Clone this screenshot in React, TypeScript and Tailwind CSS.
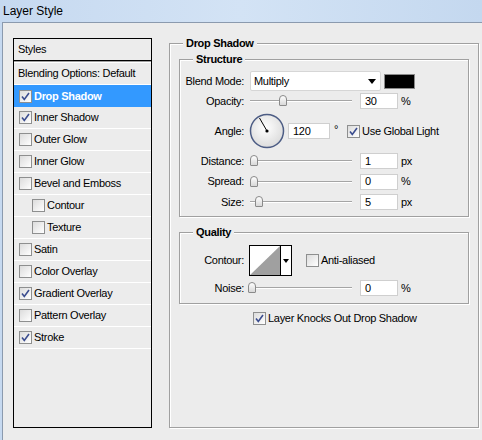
import type { ReactNode } from "react";

const styles = [
  { name: "Drop Shadow", checked: true, selected: true },
  { name: "Inner Shadow", checked: true },
  { name: "Outer Glow" },
  { name: "Inner Glow" },
  { name: "Bevel and Emboss" },
  { name: "Contour", sub: true },
  { name: "Texture", sub: true },
  { name: "Satin" },
  { name: "Color Overlay" },
  { name: "Gradient Overlay", checked: true },
  { name: "Pattern Overlay" },
  { name: "Stroke", checked: true },
];

function Check({ checked }: { checked?: boolean }) {
  return (
    <span className="flex h-[13px] w-[13px] shrink-0 items-center justify-center border border-[#8e8f8f] bg-gradient-to-br from-[#dcdcdc] to-white">
      {checked && (
        <svg width="9" height="9" viewBox="0 0 9 9">
          <path d="M1 4.5 L3.3 7.5 L8 1" fill="none" stroke="#3b4d8f" strokeWidth="1.6" />
        </svg>
      )}
    </span>
  );
}

function Group({ title, className, children }: { title: string; className: string; children: ReactNode }) {
  return (
    <div className={`relative border border-[#a0a0a0] shadow-[inset_1px_1px_0_#fff,1px_1px_0_#fff] ${className}`}>
      <span className="absolute -top-[8px] left-[13px] bg-[#ececec] px-[3px] font-bold leading-[14px]">{title}</span>
      {children}
    </div>
  );
}

function Label({ children }: { children: ReactNode }) {
  return <span className="w-[65px] shrink-0 pr-[1px] text-right">{children}</span>;
}

function Field({ value, w = "w-[38px]" }: { value: string; w?: string }) {
  return (
    <span className={`flex h-[16px] ${w} items-center border border-[#cfcfcf] bg-white pl-[4px] leading-none`}>{value}</span>
  );
}

function Slider({ at, w = "w-[102px]" }: { at: number; w?: string }) {
  return (
    <span className={`relative flex h-[14px] ${w} shrink-0 items-center`}>
      <span className="h-[2px] w-full border-t border-[#a5a5a5] bg-white" />
      <span
        className="absolute top-[1px] h-[11px] w-[8px] rounded-t-[4px] rounded-b-[1px] border border-[#8a8a8a] bg-gradient-to-b from-white to-[#d8d8d8]"
        style={{ left: at }}
      />
    </span>
  );
}

function Dial() {
  return (
    <svg width="36" height="38" viewBox="0 0 36 38" className="shrink-0">
      <defs>
        <radialGradient id="dial" cx="0.45" cy="0.4" r="0.6">
          <stop offset="0" stopColor="#ffffff" />
          <stop offset="1" stopColor="#dcdcdc" />
        </radialGradient>
      </defs>
      <circle cx="18" cy="19" r="16.5" fill="url(#dial)" stroke="#4d5d85" strokeWidth="1.5" />
      <line x1="18" y1="19" x2="10.5" y2="6" stroke="#000" strokeWidth="1" />
      <circle cx="18" cy="19" r="1.6" fill="#000" />
    </svg>
  );
}

export default function App() {
  return (
    <div className="flex h-[440px] w-[482px] flex-col overflow-hidden bg-[#ececec] font-['Liberation_Sans',Arial,sans-serif] text-[11px] tracking-[-0.3px] text-black">
      <div className="flex h-[22px] shrink-0 items-center bg-gradient-to-r from-[#c6d9f0] via-[#d3e3f5] to-[#c4d8ef] pl-[3px] text-[12px] tracking-normal">
        Layer Style
      </div>

      <div className="flex flex-1 bg-[#c6d9f0] pl-[2px]">
        <div className="flex flex-1 items-start border-l border-t border-[#8b9aae] bg-[#ececec] pl-[10px] pt-[15px]">
          {/* style list */}
          <div className="flex h-[390px] w-[139px] shrink-0 flex-col border border-black">
            <div className="flex h-[22px] items-center border-b border-black pl-[4px]">Styles</div>
            <div className="h-[2px] border-b border-white bg-[#a0a0a0]" />
            <div className="flex h-[22px] items-center border-b border-white pl-[4px]">Blending Options: Default</div>
            {styles.map((s) => (
              <div
                key={s.name}
                className={`flex h-[22px] items-center gap-[2px] ${s.sub ? "pl-[18px]" : "pl-[5px]"} ${
                  s.selected ? "bg-[#3399ff] font-bold text-white" : "border-b border-white"
                }`}
              >
                <Check checked={s.checked} />
                <span>{s.name}</span>
              </div>
            ))}
          </div>

          {/* drop shadow settings */}
          <Group title="Drop Shadow" className="ml-[17px] mt-[5px] flex h-[385px] w-[310px] flex-col pl-[9px] pt-[15px]">
            <Group title="Structure" className="flex h-[158px] w-[290px] flex-col pt-[11px]">
              <div className="flex h-[20px] items-center">
                <Label>Blend Mode:</Label>
                <span className="ml-[5px] flex h-[20px] w-[131px] items-center justify-between rounded-[2px] border border-[#d6d6d6] bg-white pl-[3px] pr-[4px]">
                  Multiply
                  <svg width="8" height="5" viewBox="0 0 8 5">
                    <path d="M0 0 H8 L4 5 Z" fill="#000" />
                  </svg>
                </span>
                <span className="ml-[3px] h-[15px] w-[31px] border border-[#8a8a8a] bg-black" />
              </div>
              <div className="flex h-[20px] items-center">
                <Label>Opacity:</Label>
                <span className="ml-[5px] flex items-center">
                  <Slider at={29} />
                </span>
                <span className="ml-[8px]">
                  <Field value="30" />
                </span>
                <span className="ml-[3px]">%</span>
              </div>
              <div className="flex h-[40px] items-center">
                <Label>Angle:</Label>
                <span className="ml-[4px] flex items-center">
                  <Dial />
                </span>
                <span className="ml-[3px]">
                  <Field value="120" w="w-[42px]" />
                </span>
                <span className="mb-[4px] ml-[4px]">°</span>
                <span className="ml-[9px] flex items-center gap-[2px]">
                  <Check checked />
                  Use Global Light
                </span>
              </div>
              {[
                { label: "Distance:", at: 0, value: "1", unit: "px", h: "h-[20px]" },
                { label: "Spread:", at: 0, value: "0", unit: "%", h: "h-[21px]" },
                { label: "Size:", at: 5, value: "5", unit: "px", h: "h-[20px]" },
              ].map((r) => (
                <div key={r.label} className={`flex ${r.h} items-center`}>
                  <Label>{r.label}</Label>
                  <span className="ml-[5px] flex items-center">
                    <Slider at={r.at} />
                  </span>
                  <span className="ml-[8px]">
                    <Field value={r.value} />
                  </span>
                  <span className="ml-[3px]">{r.unit}</span>
                </div>
              ))}
            </Group>

            <Group title="Quality" className="mt-[15px] flex h-[72px] w-[290px] flex-col pt-[12px]">
              <div className="flex h-[31px] items-center">
                <Label>Contour:</Label>
                <span className="ml-[4px] flex h-[31px] w-[43px] border border-black bg-white">
                  <svg width="30" height="29" viewBox="0 0 30 29" className="shrink-0">
                    <path d="M0 29 L30 0 V29 Z" fill="#a0a0a0" />
                  </svg>
                  <span className="flex flex-1 items-center justify-center border-l border-black">
                    <svg width="6" height="4" viewBox="0 0 6 4">
                      <path d="M0 0 H6 L3 4 Z" fill="#000" />
                    </svg>
                  </span>
                </span>
                <span className="ml-[14px] flex items-center gap-[2px]">
                  <Check />
                  Anti-aliased
                </span>
              </div>
              <div className="mt-[2px] flex h-[20px] items-center">
                <Label>Noise:</Label>
                <span className="ml-[5px] flex items-center">
                  <Slider at={-2} />
                </span>
                <span className="ml-[8px]">
                  <Field value="0" />
                </span>
                <span className="ml-[3px]">%</span>
              </div>
            </Group>

            <div className="ml-[74px] mt-[6px] flex items-center gap-[2px]">
              <Check checked />
              Layer Knocks Out Drop Shadow
            </div>
          </Group>
        </div>
      </div>
    </div>
  );
}
